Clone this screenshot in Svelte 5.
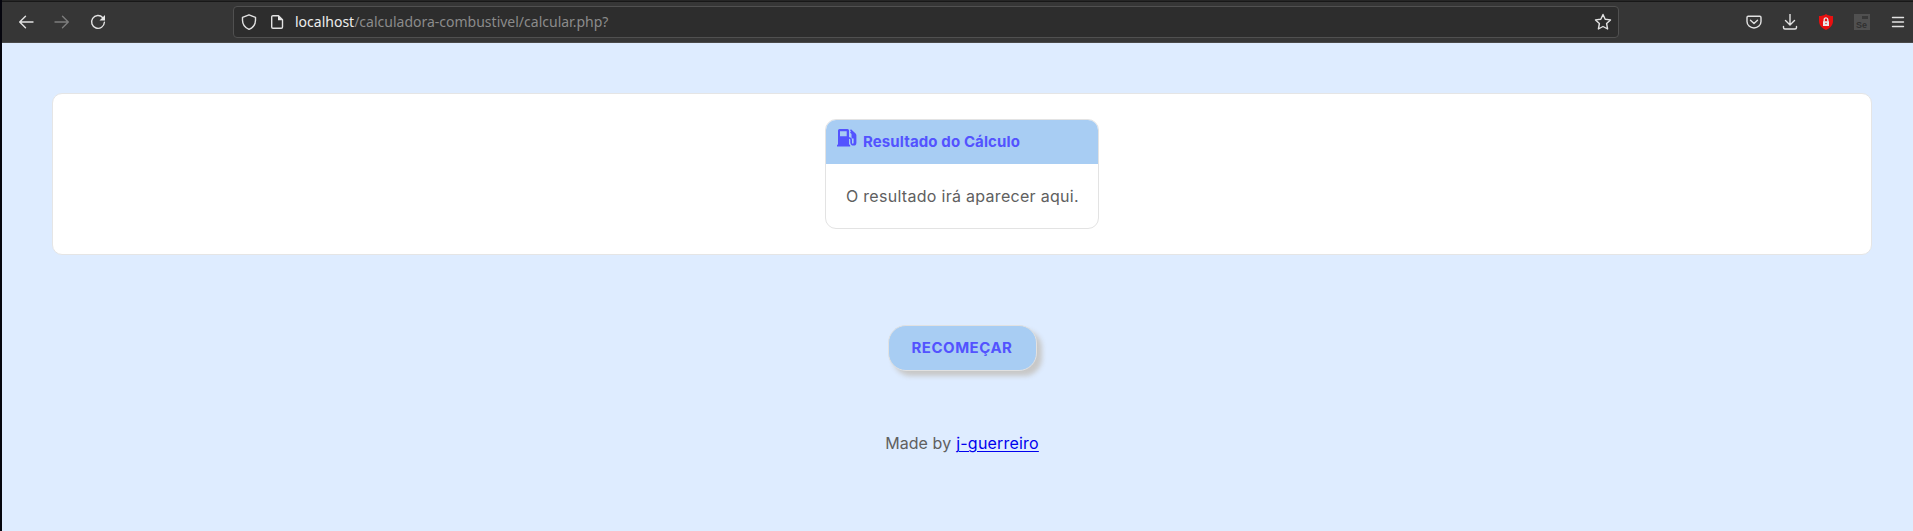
<script>
  const host = 'localhost';
  const path = '/calculadora-combustivel/calcular.php?';
</script>

<div class="window">
  <header class="toolbar">
    <nav class="history">
      <svg width="16" height="16" viewBox="0 0 16 16"><path d="M15 8H2M7.5 2.2 1.7 8l5.8 5.8" /></svg>
      <svg class="dim" width="16" height="16" viewBox="0 0 16 16"><path d="M1 8h13M8.5 2.2 14.3 8l-5.8 5.8" /></svg>
      <svg width="16" height="16" viewBox="0 0 16 16"><path d="M12.800 3.700A6.400 6.400 0 1 0 14.400 8.300" /><path class="solid" d="M15 1v5.500H9.500z" /></svg>
    </nav>
    <div class="address">
      <svg width="16" height="16" viewBox="0 0 16 16"><path d="M8 .8 14.5 3.3v2.9c0 4.2-2.6 7.4-6.5 9.1C4.100 13.600 1.500 10.400 1.500 6.200V3.300z" /></svg>
      <svg class="page-icon" width="16" height="16" viewBox="0 0 16 16"><path d="M4 1.700h5.500l4 4V13a1.300 1.300 0 0 1-1.300 1.300H4A1.300 1.300 0 0 1 2.700 13V3A1.300 1.300 0 0 1 4 1.700z" /><path class="solid" d="M9 1.500v4.700h4.800z" /></svg>
      <span class="url"><b>{host}</b>{path}</span>
      <svg class="star" width="18" height="18" viewBox="0 0 18 18"><path d="m9 1.500 2.200 4.700 5.300.7-3.900 3.600 1 5.500L9 13.500 4.400 16l1-5.500L1.500 6.900l5.300-.7z" /></svg>
    </div>
    <div class="actions">
      <svg width="16" height="16" viewBox="0 0 16 16"><path d="M2.200 2.200h11.600A1.300 1.300 0 0 1 15 3.500v4a7 6.500 0 0 1-14 0v-4a1.300 1.300 0 0 1 1.200-1.300zM4.500 6.200 8 9.500l3.500-3.300" /></svg>
      <svg width="16" height="16" viewBox="0 0 16 16"><path d="M8 .2v10.600M3.500 6.500 8 11l4.500-4.500M1.500 12.500v1a1.500 1.500 0 0 0 1.500 1.500h10a1.500 1.500 0 0 0 1.500-1.500v-1" /></svg>
      <svg width="16" height="16" viewBox="0 0 16 16"><path class="shield" d="M8 0c2 1.500 4.300 2 7 2v5c0 4.200-3 7.300-7 9-4-1.700-7-4.800-7-9V2c2.700 0 5-.5 7-2z" /><path class="solid" d="M5 7.200h6V12H5z" /><path d="M6.200 7.200V5.700a1.800 1.800 0 0 1 3.600 0v1.500" /><circle cx="8" cy="9.500" r=".7" class="shield" /></svg>
      <span class="selenium"><i></i>Se</span>
      <svg width="16" height="16" viewBox="0 0 16 16"><path d="M2.500 3.500h11M2.500 8h11M2.500 12.500h11" /></svg>
    </div>
  </header>

  <main>
    <section class="panel">
      <article class="result">
        <h1>
          <svg width="20" height="18" viewBox="0 0 20 18"><path class="pump" fill-rule="evenodd" d="M2.500 0h8Q12 0 12 1.500v6.700h.6q2.400 0 2.400 2.500v3q0 1.100.8 1.100t.8-1.100V9.500h-.8q-1.300 0-1.300-1.500V5L13 3.600l1-1.100L13 1.300 14 .2l4.600 4.300q.8.800.8 2v7.200q0 2.900-2.800 2.900t-3.300-2.900v-3q0-1-1.300-1v5.800q1.200 0 1.200 1.100v.9H0v-.9q0-1.100 1-1.100V1.500Q1 0 2.500 0zM3 2.200v5h6.700v-5z" /></svg>
          <span class="title">Resultado do Cálculo</span>
        </h1>
        <p><span class="message">O resultado irá aparecer aqui.</span></p>
      </article>
    </section>
    <button type="button"><span>RECOMEÇAR</span></button>
    <footer><span class="made">Made by</span><a href="#author">j-guerreiro</a></footer>
  </main>
</div>

<style>
  :global(body) { margin: 0; overflow: hidden; }
  * { box-sizing: border-box; }
  .window {
    height: 531px;
    display: flex;
    flex-direction: column;
    border-left: 2px solid #05050d;
    background: #deecff;
    font-family: Inter, sans-serif;
    color: #606060;
  }
  .toolbar {
    height: 43px;
    flex: none;
    display: flex;
    align-items: center;
    padding: 1px 7px 0 16px;
    background: #363636;
    border-top: 1px solid #262626;
    border-bottom: 1px solid #4a4a4a;
    box-shadow: inset 0 1px #181818;
  }
  svg { flex: none; fill: none; stroke: #e2e2e2; stroke-width: 1.4; stroke-linejoin: round; stroke-linecap: round; }
  .solid { fill: #e8e8e8; stroke: none; }
  .shield { fill: #e81010; stroke: none; }
  .dim { stroke: #7d7d7d; }
  .history { display: flex; gap: 20px; width: 215px; }
  .address {
    width: 1386px;
    height: 32px;
    display: flex;
    align-items: center;
    padding: 0 6px 0 7px;
    border: 1px solid #505050;
    border-radius: 4px;
    background: #2d2d2d;
  }
  .page-icon { margin: 0 10px 0 12px; }
  .url { font: 14px/20px "Noto Sans", sans-serif; color: #8b8b8b; white-space: pre; }
  .url b { font-weight: 400; color: #ededed; }
  .star { margin-left: auto; }
  .actions { display: flex; align-items: center; gap: 20px; margin-left: auto; }
  .selenium {
    position: relative;
    width: 16px;
    height: 16px;
    overflow: hidden;
    background: #505050;
    color: #303030;
    font: bold 9px/22px "Liberation Sans", sans-serif;
    padding-left: 2px;
  }
  .selenium i { position: absolute; top: 2px; right: 2px; width: 6px; height: 3px; background: #383838; }
  main { display: flex; flex-direction: column; align-items: center; padding: 50px 41px 0 50px; }
  .panel {
    width: 1820px;
    height: 162px;
    display: flex;
    justify-content: center;
    align-items: flex-start;
    padding-top: 25px;
    border: 1px solid #e5e5e5;
    border-radius: 10px;
    background: #fff;
  }
  .result { width: 274px; height: 110px; border: 1px solid #e3e3e3; border-radius: 11px; overflow: hidden; }
  h1 {
    height: 44px;
    margin: 0;
    padding: 8px 0 0 11px;
    display: flex;
    gap: 6px;
    background: #a8cdf3;
    color: #5353ff;
    font-size: 15px;
    line-height: 28px;
  }
  h1 svg { margin-top: 1px; }
  .pump { fill: #5353ff; stroke: none; }
  .title { letter-spacing: .12px; white-space: nowrap; }
  p { margin: 0; padding: 20px 0 0 20px; font-size: 16px; line-height: 24px; white-space: nowrap; }
  .message { letter-spacing: .29px; }
  button {
    width: 149px;
    height: 46px;
    margin: 70px 0 0;
    padding: 0;
    border: 1px solid #e1e1e1;
    border-radius: 18px;
    background: #a8cdf3;
    box-shadow: 5px 5px 5px #c8c8c8;
    color: #5353ff;
    font: 700 15px/24px Inter, sans-serif;
    letter-spacing: .5px;
  }
  footer { display: flex; gap: 5px; margin-top: 60px; font-size: 16px; line-height: 24px; letter-spacing: .08px; white-space: nowrap; }
  a { color: #0000ee; letter-spacing: .2px; text-decoration-thickness: 1px; text-underline-offset: 2px; }
</style>
